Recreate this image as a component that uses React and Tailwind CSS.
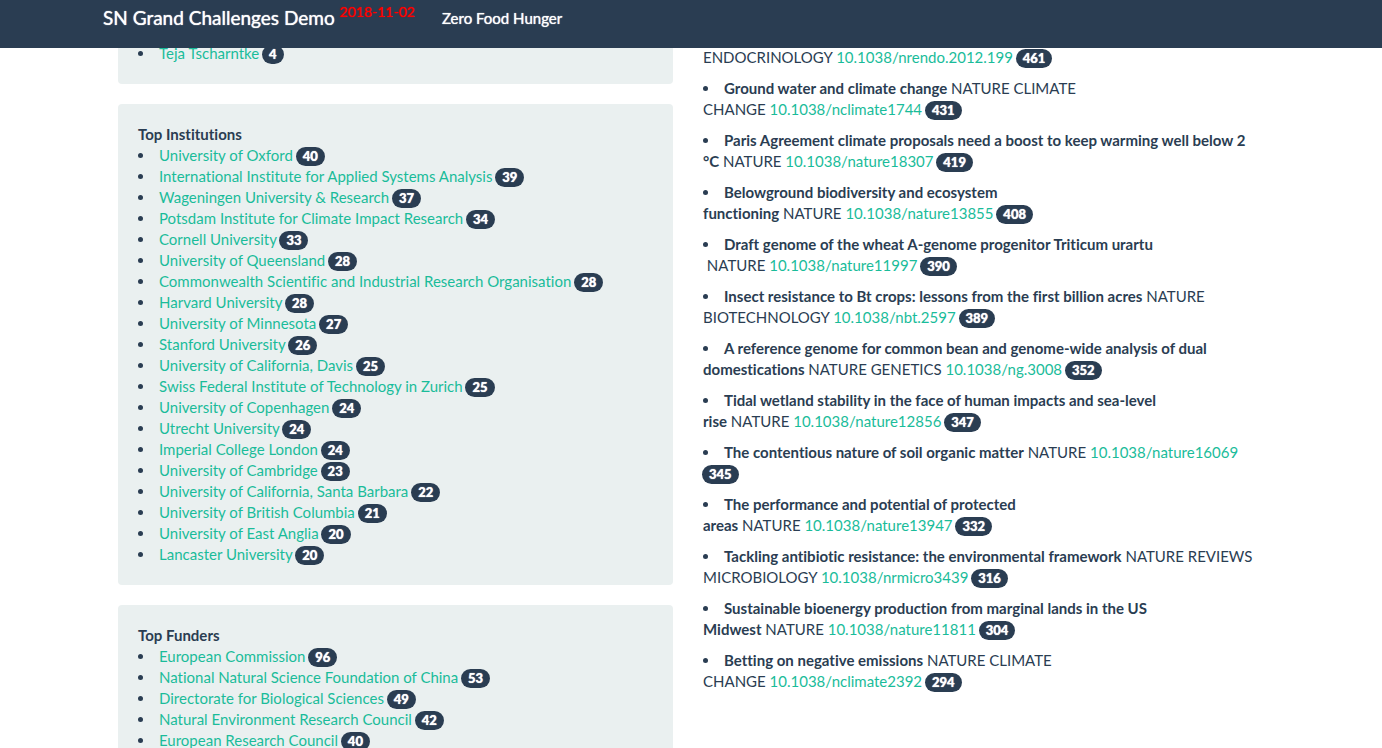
const institutions = [
  ['University of Oxford', 40],
  ['International Institute for Applied Systems Analysis', 39],
  ['Wageningen University & Research', 37],
  ['Potsdam Institute for Climate Impact Research', 34],
  ['Cornell University', 33],
  ['University of Queensland', 28],
  ['Commonwealth Scientific and Industrial Research Organisation', 28],
  ['Harvard University', 28],
  ['University of Minnesota', 27],
  ['Stanford University', 26],
  ['University of California, Davis', 25],
  ['Swiss Federal Institute of Technology in Zurich', 25],
  ['University of Copenhagen', 24],
  ['Utrecht University', 24],
  ['Imperial College London', 24],
  ['University of Cambridge', 23],
  ['University of California, Santa Barbara', 22],
  ['University of British Columbia', 21],
  ['University of East Anglia', 20],
  ['Lancaster University', 20],
];

const funders = [
  ['European Commission', 96],
  ['National Natural Science Foundation of China', 53],
  ['Directorate for Biological Sciences', 49],
  ['Natural Environment Research Council', 42],
  ['European Research Council', 40],
];

const articles = [
  ['Ground water and climate change', 'NATURE CLIMATE CHANGE', '10.1038/nclimate1744', 431],
  ['Paris Agreement climate proposals need a boost to keep warming well below 2 °C', 'NATURE', '10.1038/nature18307', 419],
  ['Belowground biodiversity and ecosystem functioning', 'NATURE', '10.1038/nature13855', 408],
  ['Draft genome of the wheat A-genome progenitor Triticum urartu ', 'NATURE', '10.1038/nature11997', 390],
  ['Insect resistance to Bt crops: lessons from the first billion acres', 'NATURE BIOTECHNOLOGY', '10.1038/nbt.2597', 389],
  ['A reference genome for common bean and genome-wide analysis of dual domestications', 'NATURE GENETICS', '10.1038/ng.3008', 352],
  ['Tidal wetland stability in the face of human impacts and sea-level rise', 'NATURE', '10.1038/nature12856', 347],
  ['The contentious nature of soil organic matter', 'NATURE', '10.1038/nature16069', 345],
  ['The performance and potential of protected areas', 'NATURE', '10.1038/nature13947', 332],
  ['Tackling antibiotic resistance: the environmental framework', 'NATURE REVIEWS MICROBIOLOGY', '10.1038/nrmicro3439', 316],
  ['Sustainable bioenergy production from marginal lands in the US Midwest', 'NATURE', '10.1038/nature11811', 304],
  ['Betting on negative emissions', 'NATURE CLIMATE CHANGE', '10.1038/nclimate2392', 294],
];

function Badge({ children }) {
  return (
    <span className="mb-[2px] -ml-px inline-block rounded-[10px] bg-[#2a3d52] px-[7px] py-[3px] text-center align-middle text-[13px] leading-[13px] font-black text-white [text-shadow:0_0_1px_#ffffff]">
      {children}
    </span>
  );
}

function TextLink({ children }) {
  return (
    <a href="#" className="text-[#1abc9a] hover:underline">
      {children}
    </a>
  );
}

function Bullet() {
  return (
    <span aria-hidden="true" className="inline-block w-[21px] pb-[3px] align-middle">
      <span className="block size-[5px] rounded-full bg-[#2a3d52]" />
    </span>
  );
}

function Panel({ title, items }) {
  return (
    <section className="mb-5 rounded-[4px] bg-[#eaf0f0] p-5">
      {title && <h2 className="font-bold">{title}</h2>}
      <ul>
        {items.map(([name, count]) => (
          <li key={name} className="h-[21px]">
            <Bullet />
            <TextLink>{name}</TextLink> <Badge>{count}</Badge>
          </li>
        ))}
      </ul>
    </section>
  );
}

export default function App() {
  return (
    <div className="bg-white font-['Lato',sans-serif] text-[15px] leading-[21px] text-[#2a3d52] [font-variant-ligatures:none]">
      <header className="relative z-10 h-12 bg-[#2a3d52] pr-[6px] text-white [text-shadow:0_0_1px_currentColor]">
        <nav className="mx-auto flex max-w-[1170px] items-start gap-[27px]">
          <a href="#" className="pt-[7px] text-[19px] leading-[21px]">
            SN Grand Challenges Demo{' '}
            <sup className="-top-2 text-[14px] text-[#ff0000]">2018-11-02</sup>
          </a>
          <a href="#" className="pt-2">
            Zero Food Hunger
          </a>
        </nav>
      </header>
      <main className="-mt-[25px] pr-[6px]">
        <div className="mx-auto grid max-w-[1140px] grid-cols-2 gap-[30px]">
          <div>
            <Panel items={[['Teja Tscharntke', 4]]} />
            <Panel title="Top Institutions" items={institutions} />
            <Panel title="Top Funders" items={funders} />
          </div>
          <div className="pt-6">
            <ul>
              <li className="mb-[10px] h-[21px]">
                ENDOCRINOLOGY <TextLink>10.1038/nrendo.2012.199</TextLink> <Badge>461</Badge>
              </li>
              {articles.map(([title, journal, doi, count]) => (
                <li key={doi} className="mb-[10px] h-[42px]">
                  <Bullet />
                  <b className="font-bold">{title}</b>
                  {`\u00a0${journal}\u00a0`}
                  <TextLink>{doi}</TextLink> <Badge>{count}</Badge>
                </li>
              ))}
            </ul>
          </div>
        </div>
      </main>
    </div>
  );
}
